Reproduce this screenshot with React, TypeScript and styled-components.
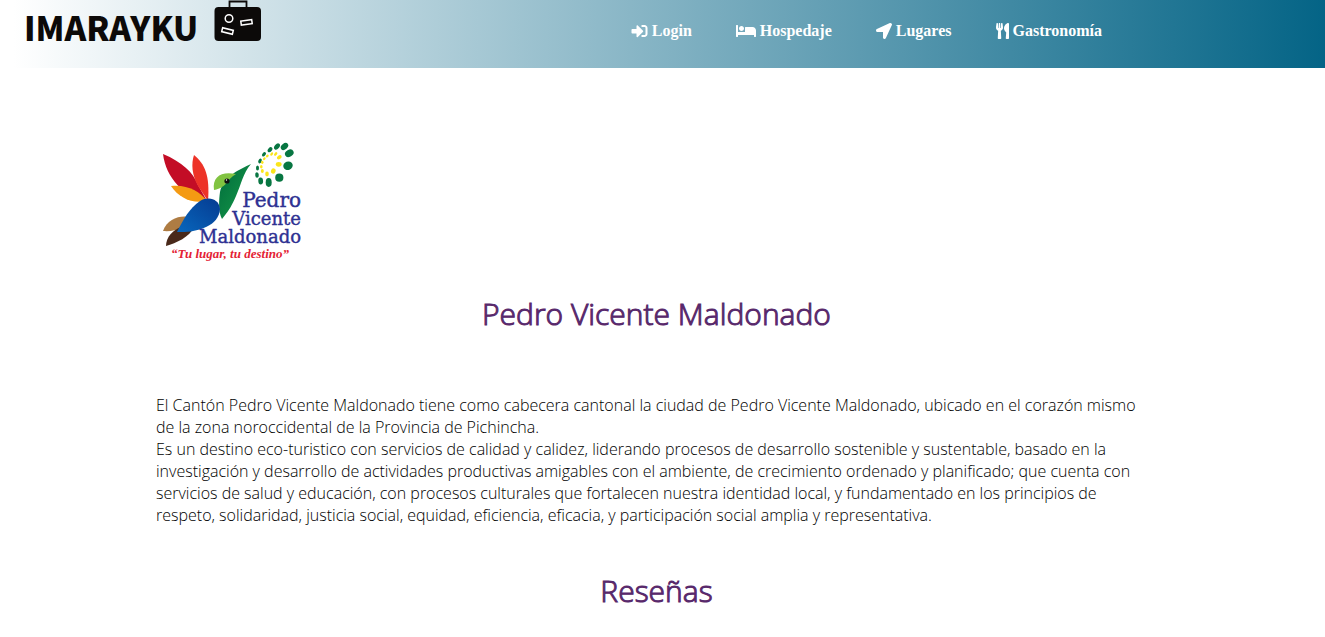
import React from "react";
import styled, { createGlobalStyle } from "styled-components";
import { FaSignInAlt, FaBed, FaLocationArrow, FaUtensils } from "react-icons/fa";

const GlobalStyle = createGlobalStyle`
  * { box-sizing: border-box; }
  body {
    margin: 0;
    background: #fff;
    color: #000;
    font-family: "Open Sans", sans-serif;
    font-weight: 300;
  }
`;

const Header = styled.header`
  display: flex;
  align-items: flex-start;
  justify-content: space-between;
  height: 68px;
  padding: 0 223px 0 24px;
  background: linear-gradient(to right, #fff 1%, #046486 100%);
`;

const Brand = styled.a`
  display: flex;
  align-items: flex-start;
  gap: 16px;
  color: #0c0a09;
  text-decoration: none;
`;

const BrandName = styled.span`
  padding-top: 3px;
  font-family: "Noto Sans CJK SC", "Noto Sans", sans-serif;
  font-size: 33px;
  font-weight: 900;
  line-height: 48px;
`;

const Nav = styled.nav`
  display: flex;
  gap: 44px;
  padding-top: 20px;
`;

const NavLink = styled.a<{ $iconWidth: number }>`
  display: flex;
  align-items: center;
  gap: 4px;
  color: #fff;
  font: bold 16px/22px "Liberation Serif", serif;
  text-decoration: none;

  svg {
    width: ${(p) => p.$iconWidth}px;
    height: 16px;
  }
`;

const Main = styled.main`
  padding: 72px 168px 0 156px;
`;

const Emblem = styled.svg`
  display: block;
`;

const Title = styled.h1`
  margin: 24px 0 0;
  color: #58286b;
  font-size: 30px;
  font-weight: 300;
  line-height: 44px;
  text-align: center;
  -webkit-text-stroke: 1px currentColor;
`;

const Description = styled.p`
  margin: 58px 0 0;
  font-size: 16px;
  line-height: 22px;
`;

const SectionTitle = styled(Title).attrs({ as: "h2" })`
  margin-top: 43px;
`;

const links = [
  { label: "Login", Icon: FaSignInAlt, width: 17 },
  { label: "Hospedaje", Icon: FaBed, width: 20 },
  { label: "Lugares", Icon: FaLocationArrow, width: 16 },
  { label: "Gastronomía", Icon: FaUtensils, width: 13 },
];

const Suitcase = () => (
  <svg width="48" height="42" viewBox="0 0 48 42" aria-hidden="true">
    <path d="M15.5 8V1.500H32.500V8" fill="none" stroke="#0c0a09" strokeWidth="1.800" />
    <rect x="0.500" y="7" width="46.500" height="34" rx="4" fill="#0c0a09" />
    <g fill="none" stroke="#fff" strokeWidth="1.500">
      <circle cx="15" cy="18.500" r="3.800" />
      <rect x="-5.500" y="-2" width="11" height="4" transform="translate(32.500 22.300) rotate(-8)" />
      <rect x="-5.500" y="-2" width="11" height="4" transform="translate(13.500 31) rotate(14)" />
    </g>
  </svg>
);

/* Each seed of the sun: cx, cy, rx, ry, rotation */
const greenSeeds = [
  [127.5, 6.5, 4.2, 2.9, -40],
  [120, 6.5, 3.6, 2.3, -50],
  [113, 9.7, 2.9, 1.9, -50],
  [107, 14.3, 2.5, 1.6, -50],
  [103, 21, 2.5, 1.6, -65],
  [100.5, 28, 1.5, 2.5, 0],
  [100, 35, 1.8, 2.8, -5],
  [103.7, 41, 2.4, 3.4, -5],
  [111.7, 42.5, 3, 4.4, 0],
  [122.3, 37.7, 4.1, 4.1, 0],
  [131, 25.7, 4.8, 4.2, -20],
  [132.3, 13.3, 4.6, 3.4, -30],
];
const yellowSeeds = [
  [122.3, 17.3, 2.6, 1.8, -35],
  [118.7, 14, 2.1, 1.3, -50],
  [114.7, 14, 1.8, 1.2, -50],
  [110.3, 16, 1.6, 1.2, -50],
  [107.3, 18.7, 1.6, 1.1, -50],
  [105.3, 22.3, 1.2, 1.6, 0],
  [104.3, 26.7, 1.3, 1.8, 0],
  [105.3, 31, 1.5, 2, 0],
  [110, 34, 1.8, 2.4, 0],
  [116.3, 31, 2.3, 2.6, 20],
  [121.7, 24.3, 2.9, 2.4, 0],
];

const Seeds = ({ items, color }: { items: number[][]; color: string }) => (
  <g fill={color}>
    {items.map(([x, y, rx, ry, angle]) => (
      <ellipse key={`${x}-${y}`} cx={x} cy={y} rx={rx} ry={ry} transform={`rotate(${angle} ${x} ${y})`} />
    ))}
  </g>
);

const TownEmblem = () => (
  <Emblem width="150" height="128" viewBox="-1 0 150 128" role="img" aria-label="Pedro Vicente Maldonado">
    <defs>
      <linearGradient id="body" x1="0" y1="0" x2="1" y2="1">
        <stop offset="0" stopColor="#006b3c" />
        <stop offset="1" stopColor="#179b49" />
      </linearGradient>
      <linearGradient id="wing" x1="1" y1="0" x2="0" y2="1">
        <stop offset="0" stopColor="#053b91" />
        <stop offset="1" stopColor="#0867bd" />
      </linearGradient>
    </defs>
    <path d="M6 14C25 22 36 32 41 45L50 61C27 57 9 38 6 14Z" fill="#c30d26" />
    <path d="M37 15C48 24 53 36 51 61L41 46C35 35 34 24 37 15Z" fill="#ed3328" />
    <path d="M14 46C29 44 43 51 50 61C35 64 22 58 14 46Z" fill="#f49a13" />
    <path d="M94 24C86 33 84 45 79 56C75 65 73 69 65 79C61 72 62 59 63 52C66 37 83 29 94 24Z" fill="url(#body)" />
    <path d="M57 50C55 36 65 31 79 34C69 40 71 47 57 50Z" fill="#81c341" />
    <circle cx="70" cy="41" r="2.600" fill="#111" />
    <circle cx="69.500" cy="40" r="0.700" fill="#fff" />
    <path d="M6 91C10 79 23 75 32 77C30 88 18 92 6 91Z" fill="#ae7c43" />
    <path d="M9 106C9 97 16 90 24 87L37 87C33 97 19 103 9 106Z" fill="#49291a" />
    <path d="M63 69C62 59 52 56 43 61C32 69 27 78 20 92C38 93 62 87 63 69Z" fill="url(#wing)" />
    <Seeds items={greenSeeds} color="#087642" />
    <Seeds items={yellowSeeds} color="#fbe51b" />
    <g fill="#2e3192" stroke="#2e3192" strokeWidth="0.400" fontFamily='"DejaVu Serif", serif' textAnchor="end">
      <text x="144" y="67" fontSize="20">Pedro</text>
      <text x="144" y="85" fontSize="18">Vicente</text>
      <text x="144" y="103" fontSize="18">Maldonado</text>
    </g>
    <text x="14" y="118" fill="#e42234" fontFamily='"Liberation Serif", serif' fontSize="13" fontStyle="italic" fontWeight="bold">
      “Tu lugar, tu destino”
    </text>
  </Emblem>
);

export default function App() {
  return (
    <>
      <GlobalStyle />
      <Header>
        <Brand href="#">
          <BrandName>IMARAYKU</BrandName>
          <Suitcase />
        </Brand>
        <Nav>
          {links.map(({ label, Icon, width }) => (
            <NavLink key={label} href="#" $iconWidth={width}>
              <Icon aria-hidden="true" />
              {label}
            </NavLink>
          ))}
        </Nav>
      </Header>
      <Main>
        <TownEmblem />
        <Title>Pedro Vicente Maldonado</Title>
        <Description>
          El Cantón Pedro Vicente Maldonado tiene como cabecera cantonal la ciudad de Pedro Vicente Maldonado, ubicado en el corazón mismo de la zona noroccidental de la Provincia de Pichincha.
          <br />
          Es un destino eco-turistico con servicios de calidad y calidez, liderando procesos de desarrollo sostenible y sustentable, basado en la investigación y desarrollo de actividades productivas amigables con el ambiente, de crecimiento ordenado y planificado; que cuenta con servicios de salud y educación, con procesos culturales que fortalecen nuestra identidad local, y fundamentado en los principios de respeto, solidaridad, justicia social, equidad, eficiencia, eficacia, y participación social amplia y representativa.
        </Description>
        <SectionTitle>Reseñas</SectionTitle>
      </Main>
    </>
  );
}
